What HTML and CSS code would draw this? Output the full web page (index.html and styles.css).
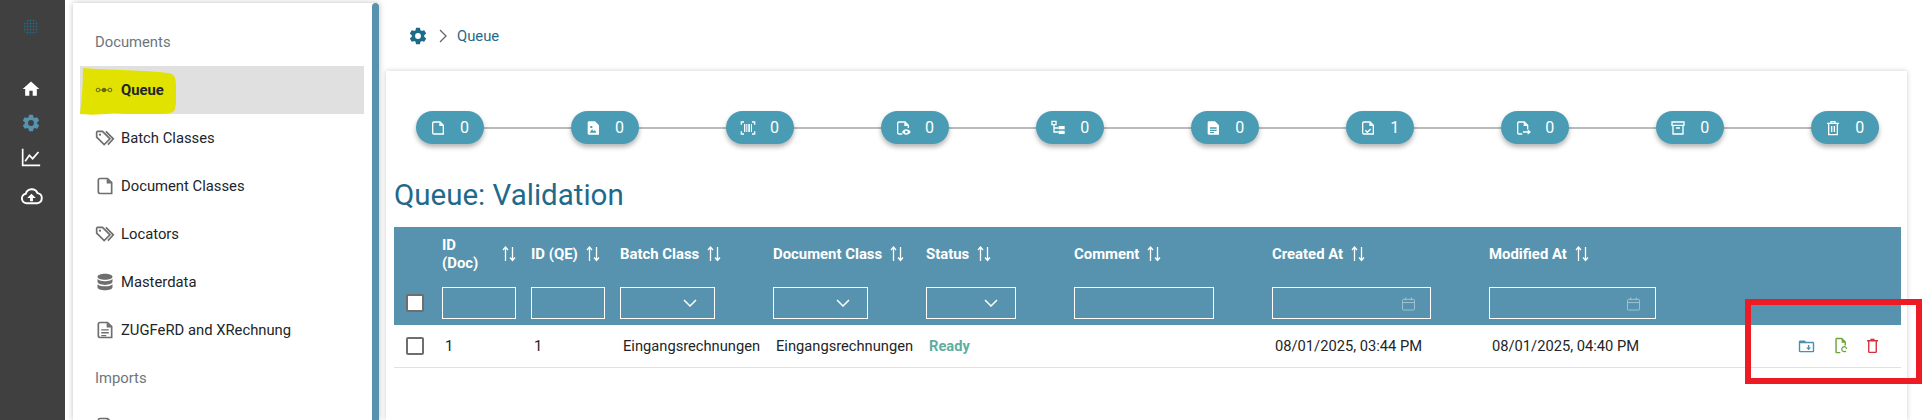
FILE: index.html
```html
<!DOCTYPE html>
<html>
<head>
  <meta charset="utf-8">
  <title>Queue</title>
  <link rel="stylesheet" href="styles.css">
</head>
<body>
<svg class="sprite" width="0" height="0">
  <symbol id="i-home" viewBox="0 0 24 24"><path fill="currentColor" d="M10 20v-6h4v6h5v-8h3L12 3 2 12h3v8z"/></symbol>
  <symbol id="i-cog" viewBox="0 0 24 24"><path fill="currentColor" d="M12 15.5A3.5 3.5 0 0 1 8.5 12 3.5 3.5 0 0 1 12 8.5a3.5 3.5 0 0 1 3.5 3.5 3.5 3.5 0 0 1-3.5 3.5m7.43-2.53c.04-.32.07-.64.07-.97 0-.33-.03-.66-.07-1l2.11-1.63c.19-.15.24-.42.12-.64l-2-3.46c-.12-.22-.39-.31-.61-.22l-2.49 1c-.52-.39-1.06-.73-1.69-.98l-.37-2.65A.506.506 0 0 0 14 2h-4c-.25 0-.46.18-.5.42l-.37 2.65c-.63.25-1.17.59-1.69.98l-2.49-1c-.22-.09-.49 0-.61.22l-2 3.46c-.13.22-.07.49.12.64L4.57 11c-.04.34-.07.67-.07 1 0 .33.03.65.07.97l-2.11 1.66c-.19.15-.25.42-.12.64l2 3.46c.12.22.39.3.61.22l2.49-1.01c.52.4 1.06.74 1.69.99l.37 2.65c.04.24.25.42.5.42h4c.25 0 .46-.18.5-.42l.37-2.65c.63-.26 1.17-.59 1.69-.99l2.49 1.01c.22.08.49 0 .61-.22l2-3.46c.12-.22.07-.49-.12-.64l-2.11-1.66z"/></symbol>
  <symbol id="i-chart" viewBox="0 0 24 24"><path fill="none" stroke="currentColor" stroke-width="2" d="M2 2v20h21M5 17l5-7 4 4 7-8"/></symbol>
  <symbol id="i-cloud" viewBox="0 0 24 24"><path fill="none" stroke="currentColor" stroke-width="2" d="M7 19a5 5 0 0 1-1-9.900 6.500 6.500 0 0 1 12.300-.6A5.300 5.300 0 0 1 18 19z"/><path fill="currentColor" d="M12 9l4.500 4.500h-3V17h-3v-3.500h-3z"/></symbol>
  <symbol id="i-queue" viewBox="0 0 18 6"><path fill="none" stroke="currentColor" d="M5 3h2M11 3h2"/><circle cx="3" cy="3" r="1.800" fill="none" stroke="currentColor"/><circle cx="9" cy="3" r="2.200" fill="currentColor"/><circle cx="15" cy="3" r="1.800" fill="none" stroke="currentColor"/></symbol>
  <symbol id="i-tags" viewBox="0 0 24 24"><path fill="none" stroke="currentColor" stroke-width="2" d="M2 5v6l9 9 7-7-9-9H3z"/><path fill="none" stroke="currentColor" stroke-width="2" d="M13 4l9 9-6.500 7"/><circle cx="6" cy="8" r="1.300" fill="currentColor"/></symbol>
  <symbol id="i-file" viewBox="0 0 24 24"><path fill="none" stroke="currentColor" stroke-width="2" d="M6 3h9l5 5v13H6a2 2 0 0 1-2-2V5a2 2 0 0 1 2-2z"/><path fill="currentColor" d="M14 3l6 6h-6z"/></symbol>
  <symbol id="i-db" viewBox="0 0 24 24"><path fill="currentColor" d="M12 2c5 0 9 1.600 9 3.700S17 9.400 12 9.400 3 7.800 3 5.700 7 2 12 2zM3 8.500c2 1.800 5.500 2.600 9 2.600s7-.8 9-2.600v3.300c0 2-4 3.700-9 3.700s-9-1.700-9-3.700zM3 14.600c2 1.800 5.500 2.600 9 2.600s7-.8 9-2.600v3.700C21 20.300 17 22 12 22s-9-1.700-9-3.700z"/></symbol>
  <symbol id="i-doc" viewBox="0 0 24 24"><path fill="none" stroke="currentColor" stroke-width="2" d="M6 3h9l5 5v13H6a2 2 0 0 1-2-2V5a2 2 0 0 1 2-2z"/><path fill="currentColor" d="M14 3l6 6h-6zM7.500 11h9v1.700h-9zM7.500 14.500h9v1.700h-9zM7.500 18h6v1.500h-6z"/></symbol>
  <symbol id="i-image" viewBox="0 0 24 24"><path fill="currentColor" d="M6 2h9l6 6v14H6a2 2 0 0 1-2-2V4a2 2 0 0 1 2-2z"/><path fill="#499cb3" d="M7 19l3.500-5 2.500 3 2-2 2 4zM8 9h3v3H8z"/></symbol>
  <symbol id="i-barcode" viewBox="0 0 24 24"><path fill="none" stroke="currentColor" stroke-width="2" d="M2 7V3h4M18 3h4v4M2 17v4h4M18 21h4v-4"/><path fill="currentColor" d="M6 6h2v12H6zM9.500 6h1.500v12H9.500zM12.500 6h2.500v12h-2.500zM16.500 6H18v12h-1.500z"/></symbol>
  <symbol id="i-eye" viewBox="0 0 24 24"><path fill="none" stroke="currentColor" stroke-width="2" d="M11 21H6a2 2 0 0 1-2-2V5a2 2 0 0 1 2-2h9l5 5v4"/><path fill="currentColor" d="M14 3l6 6h-6z"/><path fill="currentColor" d="M17 14c3 0 5.500 2 6.500 4-1 2-3.500 4-6.500 4s-5.500-2-6.500-4c1-2 3.500-4 6.500-4z"/><circle cx="17" cy="18" r="2" fill="#499cb3"/></symbol>
  <symbol id="i-tree" viewBox="0 0 24 24"><path fill="none" stroke="currentColor" stroke-width="2" d="M3 2h6v5H3zM6 7v11h7M6 12h7"/><path fill="currentColor" d="M13 9h9v5h-9zM13 16h9v5h-9z"/></symbol>
  <symbol id="i-doc-solid" viewBox="0 0 24 24"><path fill="currentColor" d="M6 2h9l6 6v14H6a2 2 0 0 1-2-2V4a2 2 0 0 1 2-2z"/><path fill="#499cb3" d="M7.500 11h10v2h-10zM7.500 14.500h10v2h-10zM7.500 18h6v1.500h-6z"/></symbol>
  <symbol id="i-check" viewBox="0 0 24 24"><path fill="none" stroke="currentColor" stroke-width="2" d="M6 3h9l5 5v13H6a2 2 0 0 1-2-2V5a2 2 0 0 1 2-2z"/><path fill="currentColor" d="M14 3l6 6h-6z"/><path fill="none" stroke="currentColor" stroke-width="2" d="M8 15.500l3 3 5-5"/></symbol>
  <symbol id="i-move" viewBox="0 0 24 24"><path fill="none" stroke="currentColor" stroke-width="2" d="M11 21H6a2 2 0 0 1-2-2V5a2 2 0 0 1 2-2h8l5 5v6"/><path fill="currentColor" d="M13 3l6 6h-6zM12 17h7v-3l5 4-5 4v-3h-7z"/></symbol>
  <symbol id="i-archive" viewBox="0 0 24 24"><path fill="none" stroke="currentColor" stroke-width="2" d="M3 3h18v5H3zM4.500 8v13h15V8M9 12h6"/></symbol>
  <symbol id="i-trash" viewBox="0 0 24 24"><path fill="none" stroke="currentColor" stroke-width="2" d="M3 5h18M9 5V2.500h6V5M5.500 5v17h13V5"/><path fill="none" stroke="currentColor" stroke-width="2" d="M10 9v9M14 9v9"/></symbol>
  <symbol id="i-sort" viewBox="0 0 14 16"><path fill="none" stroke="currentColor" stroke-width="1.300" d="M3.500 15V1.500M1 4l2.500-3L6 4M10.500 1v13.500M8 11.500l2.500 3 2.500-3"/></symbol>
  <symbol id="i-chevron" viewBox="0 0 14 8"><path fill="none" stroke="currentColor" stroke-width="1.500" d="M1 1l6 6 6-6"/></symbol>
  <symbol id="i-cal" viewBox="0 0 14 15"><path fill="none" stroke="currentColor" d="M1.500 3h11a1 1 0 0 1 1 1v9.500a1 1 0 0 1-1 1h-11a1 1 0 0 1-1-1V4a1 1 0 0 1 1-1zM.5 6.500h13M4 1v3M10 1v3"/></symbol>
  <symbol id="i-folder" viewBox="0 0 24 20"><path fill="none" stroke="currentColor" stroke-width="2" d="M2 4a1 1 0 0 1 1-1h6l2 2h10a1 1 0 0 1 1 1v11a1 1 0 0 1-1 1H3a1 1 0 0 1-1-1z"/><path fill="currentColor" d="M2 3h7l2 3H2zM14 8.500h2v3.500h2.500L15 16l-3.500-4H14z"/></symbol>
  <symbol id="i-reload" viewBox="0 0 18 24"><path fill="none" stroke="currentColor" stroke-width="2" d="M8 22H3a1 1 0 0 1-1-1V3a1 1 0 0 1 1-1h7l5 5v5"/><path fill="currentColor" d="M10 2l5 6h-5z"/><path fill="none" stroke="currentColor" stroke-width="1.700" d="M17 17a3.500 3.500 0 1 0-1 2.700"/></symbol>
  <symbol id="i-bin" viewBox="0 0 16 22"><path fill="none" stroke="currentColor" stroke-width="2" d="M0 4h16M2.500 4v16a1 1 0 0 0 1 1h9a1 1 0 0 0 1-1V4"/><path fill="currentColor" d="M5 1h6v2H5z"/></symbol>
</svg>

<div class="app">
  <nav class="rail">
    <div class="rail-logo"></div>
    <svg class="rail-icon"><use href="#i-home"/></svg>
    <svg class="rail-icon active"><use href="#i-cog"/></svg>
    <svg class="rail-icon chart"><use href="#i-chart"/></svg>
    <svg class="rail-icon cloud"><use href="#i-cloud"/></svg>
  </nav>

  <aside class="sidebar">
    <div class="menu">
      <div class="menu-title">Documents</div>
      <div class="menu-item current">
        <svg class="marker" viewBox="0 0 96 47"><path d="M3 0C30 2 65 2 88 5c7 1 8 5 8 13 0 9 1 20-2 25-3 3-8 3-30 3-14 0-20 0-30-1C20 47 8 47 0 46 2 30 3 15 3 0z"/></svg>
        <svg class="menu-icon queue-icon"><use href="#i-queue"/></svg>
        <span class="menu-label">Queue</span>
      </div>
      <div class="menu-item"><svg class="menu-icon"><use href="#i-tags"/></svg><span class="menu-label">Batch Classes</span></div>
      <div class="menu-item"><svg class="menu-icon"><use href="#i-file"/></svg><span class="menu-label">Document Classes</span></div>
      <div class="menu-item"><svg class="menu-icon"><use href="#i-tags"/></svg><span class="menu-label">Locators</span></div>
      <div class="menu-item"><svg class="menu-icon"><use href="#i-db"/></svg><span class="menu-label">Masterdata</span></div>
      <div class="menu-item"><svg class="menu-icon"><use href="#i-doc"/></svg><span class="menu-label">ZUGFeRD and XRechnung</span></div>
      <div class="menu-title">Imports</div>
      <div class="menu-item"><svg class="menu-icon"><use href="#i-file"/></svg><span class="menu-label">Imports</span></div>
    </div>
    <div class="scrollbar"></div>
  </aside>

  <main class="main">
    <div class="breadcrumb">
      <svg class="crumb-home"><use href="#i-cog"/></svg>
      <svg class="crumb-sep" viewBox="0 0 8 14"><path fill="none" stroke="currentColor" stroke-width="1.300" d="M1 1l6 6-6 6"/></svg>
      <span>Queue</span>
    </div>

    <section class="card">
      <div class="steps">
        <div class="step"><svg><use href="#i-file"/></svg><span>0</span></div>
        <div class="step"><svg><use href="#i-image"/></svg><span>0</span></div>
        <div class="step"><svg><use href="#i-barcode"/></svg><span>0</span></div>
        <div class="step"><svg><use href="#i-eye"/></svg><span>0</span></div>
        <div class="step"><svg><use href="#i-tree"/></svg><span>0</span></div>
        <div class="step"><svg><use href="#i-doc-solid"/></svg><span>0</span></div>
        <div class="step"><svg><use href="#i-check"/></svg><span>1</span></div>
        <div class="step"><svg><use href="#i-move"/></svg><span>0</span></div>
        <div class="step"><svg><use href="#i-archive"/></svg><span>0</span></div>
        <div class="step"><svg><use href="#i-trash"/></svg><span>0</span></div>
      </div>

      <h1 class="title">Queue: Validation</h1>

      <table class="queue">
        <colgroup>
          <col class="c-check"><col class="c-id"><col class="c-id"><col class="c-class"><col class="c-class">
          <col class="c-status"><col class="c-comment"><col class="c-created"><col class="c-modified"><col>
        </colgroup>
        <thead>
          <tr class="head-row">
            <th></th>
            <th><div class="th-in wide"><span>ID<br>(Doc)</span><svg class="sort"><use href="#i-sort"/></svg></div></th>
            <th><div class="th-in"><span>ID (QE)</span><svg class="sort"><use href="#i-sort"/></svg></div></th>
            <th><div class="th-in"><span>Batch Class</span><svg class="sort"><use href="#i-sort"/></svg></div></th>
            <th><div class="th-in"><span>Document Class</span><svg class="sort"><use href="#i-sort"/></svg></div></th>
            <th><div class="th-in"><span>Status</span><svg class="sort"><use href="#i-sort"/></svg></div></th>
            <th><div class="th-in"><span>Comment</span><svg class="sort"><use href="#i-sort"/></svg></div></th>
            <th><div class="th-in"><span>Created At</span><svg class="sort"><use href="#i-sort"/></svg></div></th>
            <th><div class="th-in"><span>Modified At</span><svg class="sort"><use href="#i-sort"/></svg></div></th>
            <th></th>
          </tr>
          <tr class="filter-row">
            <th><div class="check"></div></th>
            <th><div class="filter f-id"></div></th>
            <th><div class="filter f-id"></div></th>
            <th><div class="filter f-class"><svg class="chevron"><use href="#i-chevron"/></svg></div></th>
            <th><div class="filter f-class"><svg class="chevron"><use href="#i-chevron"/></svg></div></th>
            <th><div class="filter f-status"><svg class="chevron"><use href="#i-chevron"/></svg></div></th>
            <th><div class="filter f-comment"></div></th>
            <th><div class="filter f-created"><svg class="cal"><use href="#i-cal"/></svg></div></th>
            <th><div class="filter f-modified"><svg class="cal"><use href="#i-cal"/></svg></div></th>
            <th></th>
          </tr>
        </thead>
        <tbody>
          <tr>
            <td><div class="check"></div></td>
            <td>1</td>
            <td>1</td>
            <td>Eingangsrechnungen</td>
            <td>Eingangsrechnungen</td>
            <td class="ready">Ready</td>
            <td></td>
            <td>08/01/2025, 03:44 PM</td>
            <td>08/01/2025, 04:40 PM</td>
            <td>
              <div class="actions">
                <svg class="act-folder"><use href="#i-folder"/></svg>
                <svg class="act-reload"><use href="#i-reload"/></svg>
                <svg class="act-bin"><use href="#i-bin"/></svg>
              </div>
            </td>
          </tr>
        </tbody>
      </table>
    </section>
  </main>
</div>

<div class="callout"></div>
</body>
</html>
```

FILE: styles.css
```css
* {
  box-sizing: border-box;
}

html, body {
  margin: 0;
  height: 420px;
  overflow: hidden;
  background: white;
  font-family: Roboto, "Liberation Sans", sans-serif;
  font-size: 14.800px;
  color: #212529;
}

.sprite {
  position: absolute;
}

.app {
  display: flex;
  height: 420px;
}

/* left rail */
.rail {
  width: 65px;
  flex: none;
  background: #404040;
  padding-right: 3px;
  display: flex;
  flex-direction: column;
  align-items: center;
  color: white;
}

.rail-logo {
  width: 16px;
  height: 16px;
  margin-top: 19px;
  margin-bottom: 44px;
  background: radial-gradient(circle, #1f6a8a 0.8px, transparent 1.1px) 0 0 / 3px 3px;
  border-radius: 50%;
}

.rail-icon {
  width: 20px;
  height: 20px;
  margin-bottom: 14px;
}

.rail-icon.active {
  color: #5793ae;
}

.rail-icon.chart {
  margin-bottom: 18px;
}

.rail-icon.cloud {
  width: 23px;
  height: 23px;
}

/* menu */
.sidebar {
  width: 306px;
  flex: none;
  margin: 3px 0 0 8px;
  display: flex;
  box-shadow: 0 0 6px rgba(0, 0, 0, 0.25);
}

.menu {
  width: 299px;
  padding: 15px 8px 0 7px;
  overflow: hidden;
}

.menu-title {
  height: 48px;
  padding-left: 15px;
  display: flex;
  align-items: center;
  color: #6c757d;
}

.menu-item {
  position: relative;
  height: 48px;
  padding-left: 15px;
  display: flex;
  align-items: center;
  gap: 6px;
}

.menu-item.current {
  background: #e0e0e0;
  font-weight: 700;
}

.marker {
  position: absolute;
  left: 0;
  top: 2px;
  width: 96px;
  height: 47px;
  fill: #e2e200;
}

.menu-icon {
  position: relative;
  width: 20px;
  height: 20px;
  color: #6e6e6e;
}

.queue-icon {
  width: 18px;
  height: 6px;
  margin-right: 2px;
  color: #65650a;
}

.menu-label {
  position: relative;
}

.scrollbar {
  width: 7px;
  background: #5793ae;
  border-radius: 4px 4px 0 0;
}

/* main area */
.main {
  flex: 1;
  min-width: 0;
  margin-left: 7px;
  padding-right: 15px;
}

.breadcrumb {
  height: 71px;
  padding-left: 22px;
  display: flex;
  align-items: center;
  color: #1f6a8a;
}

.crumb-home {
  width: 20px;
  height: 20px;
}

.crumb-sep {
  width: 8px;
  height: 14px;
  margin: 0 10px 0 11px;
  color: #666;
}

.card {
  height: 349px;
  padding: 40px 6px 0 8px;
  box-shadow: 0 0 5px rgba(0, 0, 0, 0.2);
}

/* status steps */
.steps {
  position: relative;
  display: flex;
  justify-content: space-between;
  margin: 0 22px;
}

.steps::before {
  content: "";
  position: absolute;
  left: 0;
  right: 0;
  top: 16px;
  height: 2px;
  background: #bbb;
}

.step {
  position: relative;
  width: 67.600px;
  height: 33px;
  border-radius: 17px;
  background: #499cb3;
  box-shadow: 0 3px 5px rgba(0, 0, 0, 0.3);
  color: white;
  display: flex;
  align-items: center;
  gap: 14px;
  padding-left: 14px;
  font-size: 16px;
}

.step svg {
  width: 16px;
  height: 16px;
}

.title {
  margin: 31px 0 0;
  font-size: 29.500px;
  font-weight: 400;
  line-height: 41px;
  color: #1f6a8a;
}

/* table */
.queue {
  width: 100%;
  margin-top: 11px;
  border-collapse: collapse;
  table-layout: fixed;
}

.c-check { width: 41px; }
.c-id { width: 89px; }
.c-class { width: 153px; }
.c-status { width: 148px; }
.c-comment { width: 198px; }
.c-created { width: 217px; }
.c-modified { width: 218px; }

.queue thead {
  background: #5793ae;
  color: white;
}

.queue th {
  padding: 0 0 0 7px;
  text-align: left;
  font-size: 14.900px;
  font-weight: 700;
}

.head-row {
  height: 54px;
}

.filter-row {
  height: 44px;
}

.th-in {
  display: flex;
  align-items: center;
  gap: 8px;
}

.th-in.wide {
  justify-content: space-between;
  width: 74px;
}

.sort {
  width: 14px;
  height: 16px;
  flex: none;
}

.filter {
  height: 32px;
  border: 1px solid white;
  display: flex;
  align-items: center;
  justify-content: flex-end;
}

.f-id { width: 74px; }
.f-class { width: 95px; }
.f-status { width: 90px; }
.f-comment { width: 140px; }
.f-created { width: 159px; }
.f-modified { width: 167px; }

.chevron {
  width: 14px;
  height: 8px;
  margin-right: 17px;
}

.cal {
  width: 13px;
  height: 15px;
  margin-right: 15px;
  color: #a5c6d5;
}

.check {
  width: 18px;
  height: 18px;
  margin-left: 5px;
  border: 2px solid #6e6e6e;
  border-radius: 2px;
  background: white;
}

.queue td {
  height: 42px;
  padding: 0 0 0 10px;
  border-bottom: 1px solid #dee2e6;
  font-size: 14.700px;
  white-space: nowrap;
}

.queue td:first-child {
  padding-left: 7px;
}

.queue .ready {
  color: #5fae9f;
  font-weight: 700;
}

.actions {
  display: flex;
  align-items: center;
  justify-content: flex-end;
  padding-right: 23px;
  gap: 19px;
}

.act-folder { width: 17px; height: 14px; color: #4d8fb0; }
.act-reload { width: 14px; height: 17px; color: #6ca33b; }
.act-bin { width: 11px; height: 15px; color: #d32f3c; }

/* red box drawn over the screenshot */
.callout {
  position: absolute;
  left: 1745px;
  top: 299px;
  width: 177px;
  height: 85px;
  border: 6px solid #ed1c24;
}
```
